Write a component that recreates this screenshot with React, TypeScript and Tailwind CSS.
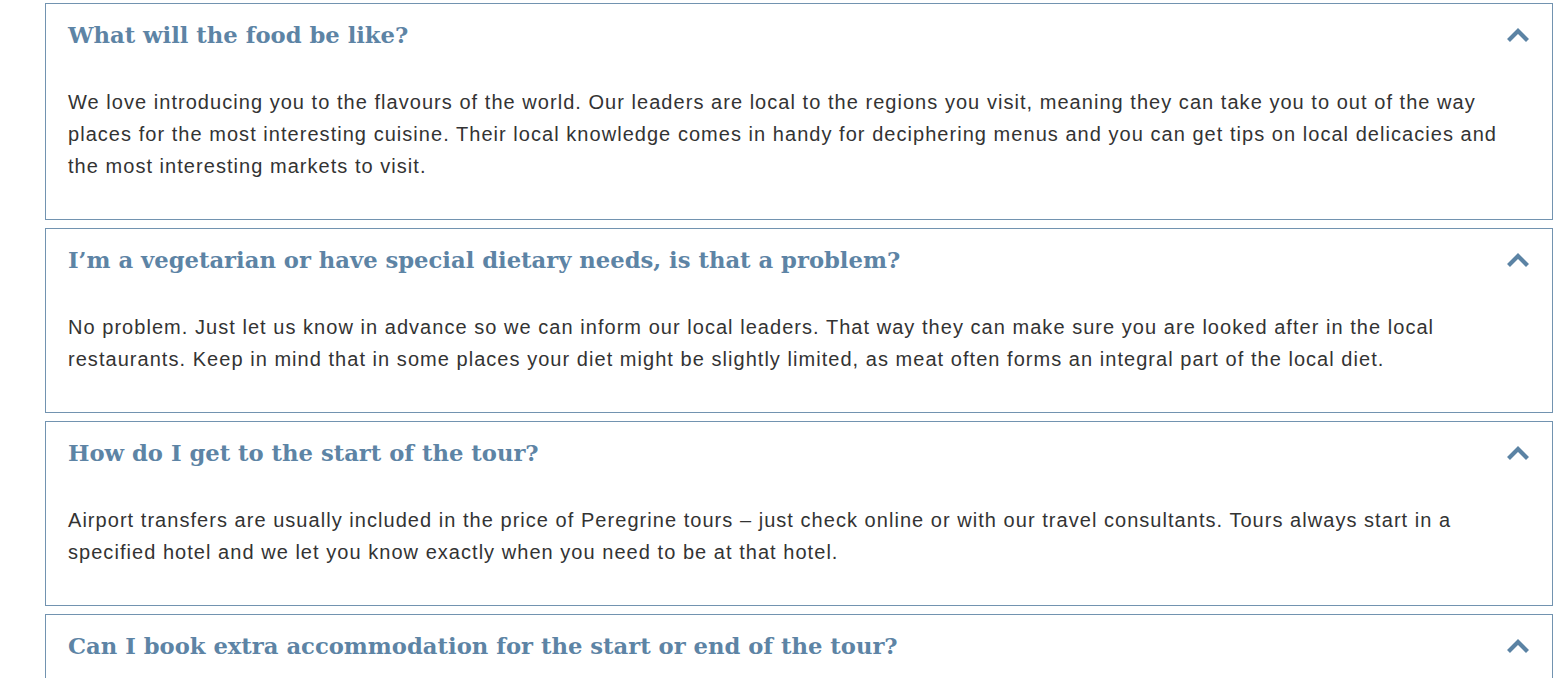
const faqs = [
  {
    q: "What will the food be like?",
    a: "We love introducing you to the flavours of the world. Our leaders are local to the regions you visit, meaning they can take you to out of the way places for the most interesting cuisine. Their local knowledge comes in handy for deciphering menus and you can get tips on local delicacies and the most interesting markets to visit.",
  },
  {
    q: "I’m a vegetarian or have special dietary needs, is that a problem?",
    a: "No problem. Just let us know in advance so we can inform our local leaders. That way they can make sure you are looked after in the local restaurants. Keep in mind that in some places your diet might be slightly limited, as meat often forms an integral part of the local diet.",
  },
  {
    q: "How do I get to the start of the tour?",
    a: "Airport transfers are usually included in the price of Peregrine tours – just check online or with our travel consultants. Tours always start in a specified hotel and we let you know exactly when you need to be at that hotel.",
  },
  {
    q: "Can I book extra accommodation for the start or end of the tour?",
    a: "Yes, we can arrange extra nights of accommodation before or after your tour. Just ask your travel consultant when you book.",
  },
];

function Chevron() {
  return (
    <svg width="24" height="16" viewBox="0 0 24 16" className="shrink-0">
      <path d="M2.5 13.5 L12 4 L21.5 13.5" fill="none" stroke="#5b83a4" strokeWidth="4.2" strokeLinecap="butt" strokeLinejoin="miter" />
    </svg>
  );
}

export default function App() {
  return (
    <div className="h-[678px] overflow-hidden bg-white pl-[45px] pr-[13px] pt-[3px]">
      <div className="flex flex-col gap-[8px]">
        {faqs.map((f) => (
          <div key={f.q} className="border border-[#7293b0] bg-white px-[22px] pb-[37px]">
            <div className="flex h-[62px] items-center justify-between">
              <h3 className="text-[22.7px] font-bold text-[#5d84a5] [font-family:'DejaVu_Serif',Georgia,serif]">
                {f.q}
              </h3>
              <Chevron />
            </div>
            <p className="mt-[20px] text-[20px] leading-[32px] tracking-[1.04px] text-[#333333] [font-family:'Liberation_Sans',Arial,sans-serif]">
              {f.a}
            </p>
          </div>
        ))}
      </div>
    </div>
  );
}
